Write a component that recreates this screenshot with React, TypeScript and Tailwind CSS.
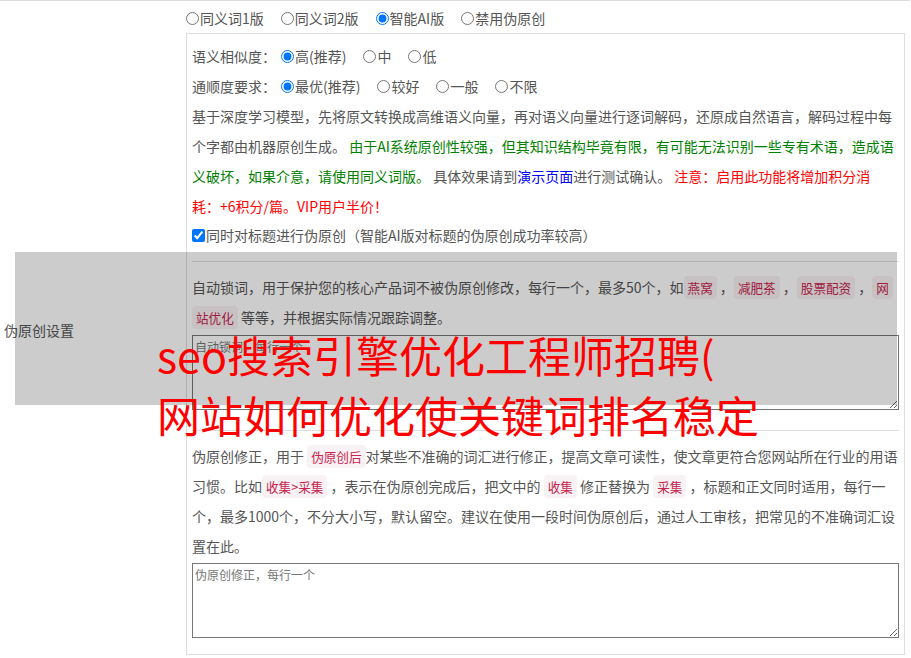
import React from "react";

const Code = ({ children }: { children: React.ReactNode }) => (
  <code className="rounded-[4px] bg-[#f9f2f4] px-[4px] py-[2px] font-['Noto_Sans_CJK_SC',sans-serif] text-[12.6px] leading-none text-[#c7254e] [box-decoration-break:clone]">
    {children}
  </code>
);

const Radio = ({
  name,
  label,
  checked,
  last,
}: {
  name: string;
  label: string;
  checked?: boolean;
  last?: boolean;
}) => (
  <label className={"inline-flex items-center " + (last ? "" : "mr-[17px]")}>
    <input
      type="radio"
      name={name}
      defaultChecked={checked}
      className="m-0 mr-[1px] h-[13px] w-[13px]"
    />
    <span>{label}</span>
  </label>
);

const App = () => {
  return (
    <div className="relative min-h-[658px] bg-white font-['Noto_Sans_CJK_SC',sans-serif] text-[14px] text-[#555]">
      <div className="flex w-[910px] border-t border-[#ddd]">
        {/* label column */}
        <div className="flex w-[186px] shrink-0 items-center pl-[4px]">伪原创设置</div>

        {/* content column */}
        <div className="flex-1 pr-[5px] pb-[5px]">
          <div className="flex h-[32px] items-center pt-[3px]">
            <Radio name="ver" label="同义词1版" />
            <Radio name="ver" label="同义词2版" />
            <Radio name="ver" label="智能AI版" checked />
            <Radio name="ver" label="禁用伪原创" last />
          </div>

          <div className="border border-[#ddd] px-[5px] pt-[7px] pb-[16px]">
            <div className="flex h-[30px] items-center">
              <span className="mr-[5px]">语义相似度：</span>
              <Radio name="sim" label="高(推荐)" checked />
              <Radio name="sim" label="中" />
              <Radio name="sim" label="低" last />
            </div>
            <div className="flex h-[30px] items-center">
              <span className="mr-[5px]">通顺度要求：</span>
              <Radio name="flu" label="最优(推荐)" checked />
              <Radio name="flu" label="较好" />
              <Radio name="flu" label="一般" />
              <Radio name="flu" label="不限" last />
            </div>

            <p className="leading-[30px]">
              基于深度学习模型，先将原文转换成高维语义向量，再对语义向量进行逐词解码，还原成自然语言，解码过程中每个字都由机器原创生成。{" "}
              <span className="text-[#008000]">
                由于AI系统原创性较强，但其知识结构毕竟有限，有可能无法识别一些专有术语，造成语义破坏，如果介意，请使用同义词版。
              </span>{" "}
              具体效果请到<a className="text-[#0000ff]">演示页面</a>进行测试确认。{" "}
              <span className="text-[#ff0000]">
                注意：启用此功能将增加积分消
                <br />
                耗：+6积分/篇。VIP用户半价！
              </span>
            </p>

            <label className="flex h-[29px] items-center">
              <input type="checkbox" defaultChecked className="m-0 mr-[1px] h-[13px] w-[13px]" />
              <span>同时对标题进行伪原创（智能AI版对标题的伪原创成功率较高）</span>
            </label>

            <div className="mt-[11px] h-px bg-[#ddd]" />

            <p className="mt-[10px] leading-[30px]">
              自动锁词，用于保护您的核心产品词不被伪原创修改，每行一个，最多50个，如<Code>燕窝</Code> ，
              <Code>减肥茶</Code> ，<Code>股票配资</Code> ，<Code>网站优化</Code> 等等，并根据实际情况跟踪调整。
            </p>
            <textarea
              placeholder="自动锁词，每行一个"
              className="mt-[3px] block h-[75px] w-full border border-[#767676] bg-white px-[2px] py-[2px] text-[12px] leading-[18px] placeholder:text-[#777]"
            />

            <div className="mt-[20px] h-px bg-[#ddd]" />

            <p className="mt-[10px] leading-[30px]">
              伪原创修正，用于 <Code>伪原创后</Code>对某些不准确的词汇进行修正，提高文章可读性，使文章更符合您网站所在行业的用语习惯。比如<Code>收集&gt;采集</Code> ，表示在伪原创完成后，把文中的 <Code>收集</Code> 修正替换为 <Code>采集</Code> ，标题和正文同时适用，每行一个，最多1000个，不分大小写，默认留空。建议在使用一段时间伪原创后，通过人工审核，把常见的不准确词汇设置在此。
            </p>
            <textarea
              placeholder="伪原创修正，每行一个"
              className="mt-[2px] block h-[75px] w-full border border-[#767676] bg-white px-[2px] py-[2px] text-[12px] leading-[18px] placeholder:text-[#777]"
            />
          </div>
        </div>
      </div>

      {/* overlay banner */}
      <div className="absolute left-[15px] top-[252px] h-[153px] w-[882px] bg-black/20" />
      <div className="absolute left-[157px] top-[324px] whitespace-nowrap font-['Noto_Sans_CJK_SC',sans-serif] text-[43px] leading-[60px] text-[#ff0000]">
        <div>seo搜索引擎优化工程师招聘(</div>
        <div>网站如何优化使关键词排名稳定</div>
      </div>
    </div>
  );
};

export default App;
